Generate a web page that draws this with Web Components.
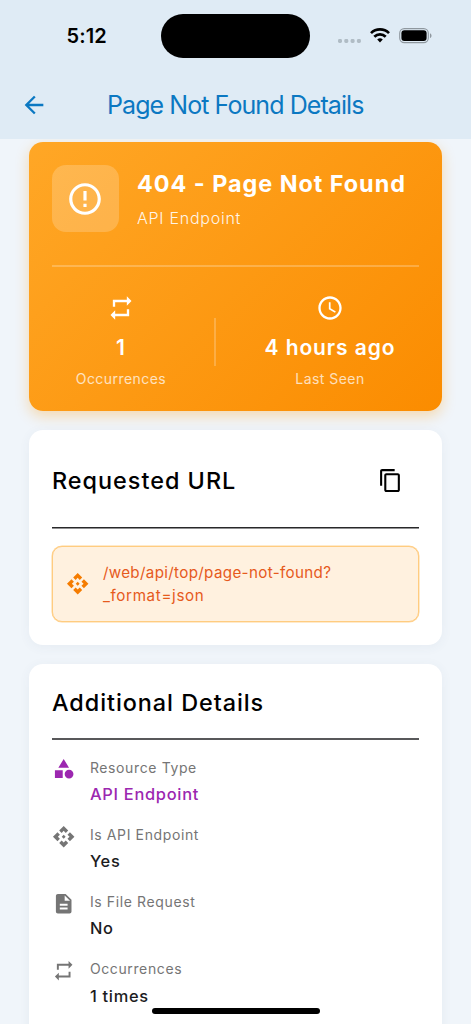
<!DOCTYPE html>
<html lang="en">
<head>
<meta charset="utf-8">
<title>Page Not Found Details</title>
<style>
html,body{margin:0;height:100%;overflow:hidden;background:#f0f5fa}
body{font-family:Inter,"Liberation Sans",sans-serif;color:#000}
</style>
</head>
<body>
<app-screen>
  <status-bar slot="top"></status-bar>
  <nav-bar slot="top">Page Not Found Details</nav-bar>
  <summary-card></summary-card>
  <url-card></url-card>
  <details-card>
    <detail-row icon="category" accent><span>Resource Type</span><b slot="value">API Endpoint</b></detail-row>
    <detail-row icon="api"><span>Is API Endpoint</span><b slot="value">Yes</b></detail-row>
    <detail-row icon="file"><span>Is File Request</span><b slot="value">No</b></detail-row>
    <detail-row icon="repeat"><span>Occurrences</span><b slot="value">1 times</b></detail-row>
  </details-card>
</app-screen>
<script>
const define = (name, html, setup) => customElements.define(name, class extends HTMLElement {
  constructor() {
    super();
    this.attachShadow({mode: 'open'}).innerHTML = html;
  }
  connectedCallback() { if (setup) setup(this, this.shadowRoot); }
});

const PATHS = {
  back: 'M20 11H7.83l5.59-5.59L12 4l-8 8 8 8 1.41-1.41L7.83 13H20v-2z',
  error: 'M11 15h2v2h-2zm0-8h2v6h-2zm.99-5C6.47 2 2 6.48 2 12s4.47 10 9.99 10C17.52 22 22 17.52 22 12S17.52 2 11.99 2zM12 20c-4.42 0-8-3.58-8-8s3.58-8 8-8 8 3.58 8 8-3.58 8-8 8z',
  repeat: 'M7 7h10v3l4-4-4-4v3H5v6h2V7zm10 10H7v-3l-4 4 4 4v-3h12v-6h-2v4z',
  clock: 'M11.99 2C6.47 2 2 6.48 2 12s4.47 10 9.99 10C17.52 22 22 17.52 22 12S17.52 2 11.99 2zM12 20c-4.42 0-8-3.58-8-8s3.58-8 8-8 8 3.58 8 8-3.58 8-8 8zm.5-13H11v6l5.25 3.15.75-1.23-4.5-2.67z',
  copy: 'M16 1H4c-1.1 0-2 .9-2 2v14h2V3h12V1zm3 4H8c-1.1 0-2 .9-2 2v14c0 1.1.9 2 2 2h11c1.1 0 2-.9 2-2V7c0-1.1-.9-2-2-2zm0 16H8V7h11v14z',
  api: 'M14 12l-2 2-2-2 2-2 2 2zm-2-6l2.12 2.12 2.5-2.5L12 1 7.38 5.62l2.5 2.5L12 6zm-6 6l2.12-2.12-2.5-2.5L1 12l4.62 4.62 2.5-2.5L6 12zm12 0l-2.12 2.12 2.5 2.5L23 12l-4.62-4.62-2.5 2.5L18 12zm-6 6l-2.12-2.12-2.5 2.5L12 23l4.62-4.62-2.5-2.5L12 18z',
  category: 'M12 2l-5.5 9h11zM17.5 13a4.5 4.5 0 1 0 0 9 4.5 4.5 0 1 0 0-9zM3 13.5h8v8H3z',
  file: 'M14 2H6c-1.1 0-1.99.9-1.99 2L4 20c0 1.1.89 2 1.99 2H18c1.1 0 2-.9 2-2V8l-6-6zm2 16H8v-2h8v2zm0-4H8v-2h8v2zm-3-5V3.5L18.5 9H13z'
};

define('m-icon', `<style>
:host{display:block;flex:none;width:var(--size,23.4px);height:var(--size,23.4px)}
svg{display:block;width:100%;height:100%;fill:currentColor}
</style><svg viewBox="0 0 24 24"><path/></svg>`,
(el, root) => root.querySelector('path').setAttribute('d', PATHS[el.getAttribute('name')]));

define('app-screen', `<style>
:host{display:flex;flex-direction:column;height:1024px;overflow:hidden;position:relative}
header{background:#dfebf5;height:138.5px;flex:none;display:flex;flex-direction:column}
main{flex:1;min-height:0;overflow:hidden;padding:3.5px 29px 0;display:flex;flex-direction:column;gap:18.5px}
.home{position:absolute;left:152px;top:1008px;width:168px;height:6px;border-radius:3px;background:#000}
</style><header><slot name="top"></slot></header><main><slot></slot></main><div class="home"></div>`);

define('status-bar', `<style>
:host{display:grid;grid-template-columns:161px 149px 1fr;height:72px;align-items:center}
.time{font-size:20px;font-weight:560;letter-spacing:.1px;padding-left:66.5px}
.island{height:44px;border-radius:22px;background:#000}
svg{display:block;margin-left:27px}
</style><span class="time">5:12</span><div class="island"></div>
<svg width="96" height="18" viewBox="0 0 96 18">
<g fill="#b0bcc5"><rect x="1" y="12" width="4" height="4" rx="1.4"/><rect x="7.3" y="12" width="4" height="4" rx="1.4"/><rect x="13.6" y="12" width="4" height="4" rx="1.4"/><rect x="19.9" y="12" width="4" height="4" rx="1.4"/></g>
<g fill="none" stroke="#000" stroke-width="2.7"><path d="M34 6.1a12.8 12.8 0 0 1 18 0"/><path d="M37.3 9.8a8.1 8.1 0 0 1 11.4 0"/></g><path d="M43 15.5l-2.8-2.9a4 4 0 0 1 5.6 0z"/>
<rect x="62.7" y="1.6" width="28.6" height="14" rx="4.6" fill="none" stroke="#8f989f" stroke-width="1.1"/><rect x="64.4" y="3.3" width="25.2" height="10.6" rx="3"/><path d="M93 6.2c2 .8 2 4 0 4.8z" fill="#8f989f"/>
</svg>`);

define('nav-bar', `<style>
:host{display:flex;align-items:center;height:66px;color:#0b78c2}
m-icon{--size:28px;margin-left:20px}
span{margin-left:59px;font-size:25px;font-weight:370;letter-spacing:-.93px;white-space:nowrap}
</style><m-icon name="back"></m-icon><span><slot></slot></span>`);

define('stat-item', `<style>
:host{display:flex;flex-direction:column;align-items:center;white-space:nowrap}
m-icon{--size:28px}
.v{font-size:21px;line-height:28px;font-weight:600;margin-top:12px;letter-spacing:.9px}
.l{font-size:14px;line-height:20px;margin-top:7px;opacity:.72;font-weight:400;letter-spacing:.45px}
</style><m-icon></m-icon><div class="v"><slot></slot></div><div class="l"><slot name="label"></slot></div>`,
(el, root) => { const i = root.querySelector('m-icon'); i.shadowRoot.querySelector('path').setAttribute('d', PATHS[el.getAttribute('icon')]); });

define('summary-card', `<style>
:host{display:block;flex:none;box-sizing:border-box;height:269px;padding:23px;border-radius:14px;color:#fff;background:linear-gradient(135deg,#ffa726,#fb8c00);box-shadow:0 5px 14px rgba(255,152,0,.3)}
.head{display:flex;height:100px;border-bottom:2px solid rgba(255,255,255,.24)}
.tile{width:67px;height:67px;border-radius:14px;background:rgba(255,255,255,.2);display:grid;place-items:center}
m-icon{--size:38px}
.tile m-icon{margin-left:-1px}
.txt{margin-left:18px;white-space:nowrap}
.t{font-size:23.4px;font-weight:670;line-height:28px;margin-top:5px;letter-spacing:.96px}
.s{font-size:16px;line-height:22px;margin-top:9px;opacity:.9;font-weight:360;letter-spacing:.75px}
.stats{display:grid;grid-template-columns:138px 1fr 180px;padding-top:26.5px}
stat-item:last-child{margin-left:2px}
i{width:2px;height:48px;background:rgba(255,255,255,.22);margin:24px 0 0 24px}
</style><div class="head"><div class="tile"><m-icon name="error"></m-icon></div><div class="txt"><div class="t">404 - Page Not Found</div><div class="s">API Endpoint</div></div></div>
<div class="stats"><stat-item icon="repeat">1<span slot="label">Occurrences</span></stat-item><i></i><stat-item icon="clock">4 hours ago<span slot="label">Last Seen</span></stat-item></div>`);

define('url-card', `<style>
:host{display:block;flex:none;box-sizing:border-box;height:215.5px;padding:0 23px;border-radius:14px;background:#fff;box-shadow:0 2px 12px rgba(60,90,120,.06)}
.head{display:flex;justify-content:space-between;align-items:center;height:97px;padding:4px 16.5px 0 0;box-sizing:border-box;white-space:nowrap}
.line{height:2px;background:linear-gradient(#28282a 50%,#909092 50%)}
.t{font-size:23.4px;font-weight:500;letter-spacing:1px}
.head m-icon{--size:25px}
.box{display:flex;align-items:center;box-sizing:border-box;height:76px;margin-top:17.5px;padding-left:14px;border:1px solid #ffcc80;box-shadow:0 0 0 .5px #ffd596;border-radius:10px;background:#fff1df;color:#f57c00}
.box m-icon{margin-left:-.8px}
p{margin:0 0 0 13.3px;font-size:15.2px;line-height:23px;color:#e65a1c;letter-spacing:.33px;white-space:nowrap}
.second{letter-spacing:.65px}
</style><div class="head"><span class="t">Requested URL</span><m-icon name="copy"></m-icon></div><div class="line"></div>
<div class="box"><m-icon name="api"></m-icon><p>/web/api/top/page-not-found?<br><span class="second">_format=json</span></p></div>`);

define('details-card', `<style>
:host{display:block;flex:none;box-sizing:border-box;height:420px;padding:0 23px;border-radius:14px;background:#fff;box-shadow:0 2px 12px rgba(60,90,120,.06)}
.t{display:flex;align-items:center;box-sizing:border-box;height:74.5px;padding-top:3.5px;font-size:23.4px;font-weight:500;letter-spacing:.95px;white-space:nowrap}
.line{height:2px;background:#58585a}
.rows{padding-top:17.5px}
</style><div class="t">Additional Details</div><div class="line"></div><div class="rows"><slot></slot></div>`);

define('detail-row', `<style>
:host{display:flex;height:67.3px;color:#757575;--value:#1c1c1e}
:host([accent]){--icon:#9c27b0;--value:#9c27b0}
m-icon{color:var(--icon,#757575);margin:-.3px 0 0 -.4px}
.c{margin-left:14.9px;white-space:nowrap}
.l{font-size:14px;line-height:20px;letter-spacing:.62px}
.v{font-size:16.4px;line-height:22px;margin-top:5.3px;color:var(--value);letter-spacing:.73px}
::slotted(b){font-weight:500}
</style><m-icon></m-icon><div class="c"><div class="l"><slot></slot></div><div class="v"><slot name="value"></slot></div></div>`,
(el, root) => { const i = root.querySelector('m-icon'); i.shadowRoot.querySelector('path').setAttribute('d', PATHS[el.getAttribute('icon')]); });
</script>
</body>
</html>
